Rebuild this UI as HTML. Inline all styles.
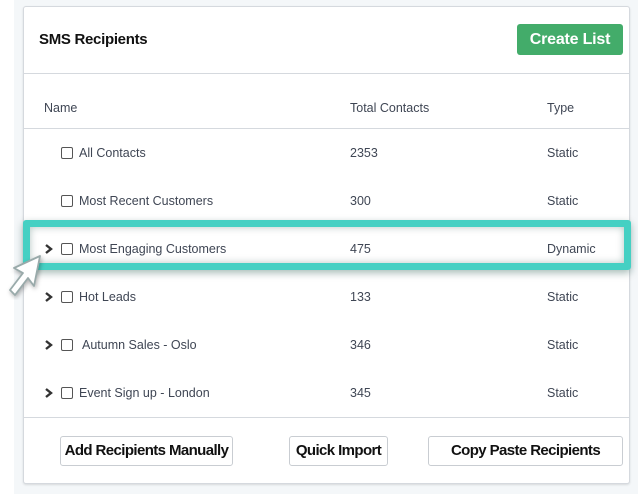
<!DOCTYPE html>
<html><head><meta charset="utf-8"><style>
*{margin:0;padding:0;box-sizing:border-box}
body{width:638px;height:494px;background:#f4f7f9;position:relative;overflow:hidden;font-family:"Liberation Sans",Arial,sans-serif;color:#3f4654}
.left{position:absolute;left:0;top:0;width:14px;height:494px;background:#fff}
.card{position:absolute;left:23px;top:6px;width:607px;height:478px;background:#fff;border:1px solid #d5d9de;border-radius:3px;box-shadow:0 1px 2px rgba(0,0,0,.12)}
.abs{position:absolute}
.line{position:absolute;left:23px;width:607px;height:1px;background:#d5d9de}
.title{left:39px;top:31px;font-size:15px;font-weight:bold;color:#111;letter-spacing:-0.3px}
.create{left:517px;top:24px;width:106px;height:31px;background:#43ac6a;border-radius:3px;color:#fff;font-size:16px;font-weight:bold;text-align:center;line-height:31px;letter-spacing:-0.2px}
.th{top:101px;font-size:12.5px;color:#3f4654}
.row{position:absolute;left:23px;width:607px;height:48px;font-size:12.5px;color:#3f4654}
.row span{position:absolute;top:0;line-height:48px;white-space:nowrap}
.cb{position:absolute;width:12px;height:12px;border:1.3px solid #555;border-radius:2px;top:18px;background:#fff}
.chev{position:absolute;top:18px;left:20px;width:12px;height:12px}
.btn{position:absolute;top:436px;height:30px;border:1px solid #c9cdd2;border-radius:3px;background:#fff;font-size:15px;font-weight:bold;color:#111;text-align:center;line-height:28px;letter-spacing:-0.6px;white-space:nowrap}
.hl{position:absolute;left:23px;top:220px;width:608px;height:50px;border:7px solid #45d0c3;border-radius:3px;box-shadow:0 3px 8px rgba(0,60,50,.35), inset 0 0 8px rgba(0,60,50,.3)}
</style></head><body>
<div class="left"></div>
<div class="card"></div>
<div class="abs title">SMS Recipients</div>
<div class="abs create">Create List</div>
<div class="line" style="top:73px"></div>
<div class="abs th" style="left:44px">Name</div>
<div class="abs th" style="left:350px">Total Contacts</div>
<div class="abs th" style="left:547px">Type</div>
<div class="line" style="top:128px"></div>

<div class="row" style="top:129px"><div class="cb" style="left:38px"></div><span style="left:56px">All Contacts</span><span style="left:327px">2353</span><span style="left:524px">Static</span></div>
<div class="row" style="top:177px"><div class="cb" style="left:38px"></div><span style="left:56px">Most Recent Customers</span><span style="left:327px">300</span><span style="left:524px">Static</span></div>
<div class="row" style="top:225px"><svg class="chev" viewBox="0 0 12 12"><path d="M3 2l5 4-5 4" fill="none" stroke="#333" stroke-width="2.4"/></svg><div class="cb" style="left:38px"></div><span style="left:56px">Most Engaging Customers</span><span style="left:327px">475</span><span style="left:524px">Dynamic</span></div>
<div class="row" style="top:273px"><svg class="chev" viewBox="0 0 12 12"><path d="M3 2l5 4-5 4" fill="none" stroke="#333" stroke-width="2.4"/></svg><div class="cb" style="left:38px"></div><span style="left:56px">Hot Leads</span><span style="left:327px">133</span><span style="left:524px">Static</span></div>
<div class="row" style="top:321px"><svg class="chev" viewBox="0 0 12 12"><path d="M3 2l5 4-5 4" fill="none" stroke="#333" stroke-width="2.4"/></svg><div class="cb" style="left:38px"></div><span style="left:59px">Autumn Sales - Oslo</span><span style="left:327px">346</span><span style="left:524px">Static</span></div>
<div class="row" style="top:369px"><svg class="chev" viewBox="0 0 12 12"><path d="M3 2l5 4-5 4" fill="none" stroke="#333" stroke-width="2.4"/></svg><div class="cb" style="left:38px"></div><span style="left:56px">Event Sign up - London</span><span style="left:327px">345</span><span style="left:524px">Static</span></div>

<div class="hl"></div>
<svg class="abs" style="left:4px;top:252px" width="42" height="48" viewBox="0 0 42 48">
<path d="M36 4 L10 16 L19 21 L6 38 L11 43 L24 26 L30 34 Z" fill="#fff" stroke="#9aa" stroke-width="1.8" stroke-linejoin="round" style="filter:drop-shadow(1px 2px 2px rgba(0,0,0,.3))"/>
</svg>

<div class="line" style="top:417px"></div>
<div class="btn" style="left:60px;width:173px">Add Recipients Manually</div>
<div class="btn" style="left:289px;width:99px">Quick Import</div>
<div class="btn" style="left:428px;width:195px">Copy Paste Recipients</div>
</body></html>
